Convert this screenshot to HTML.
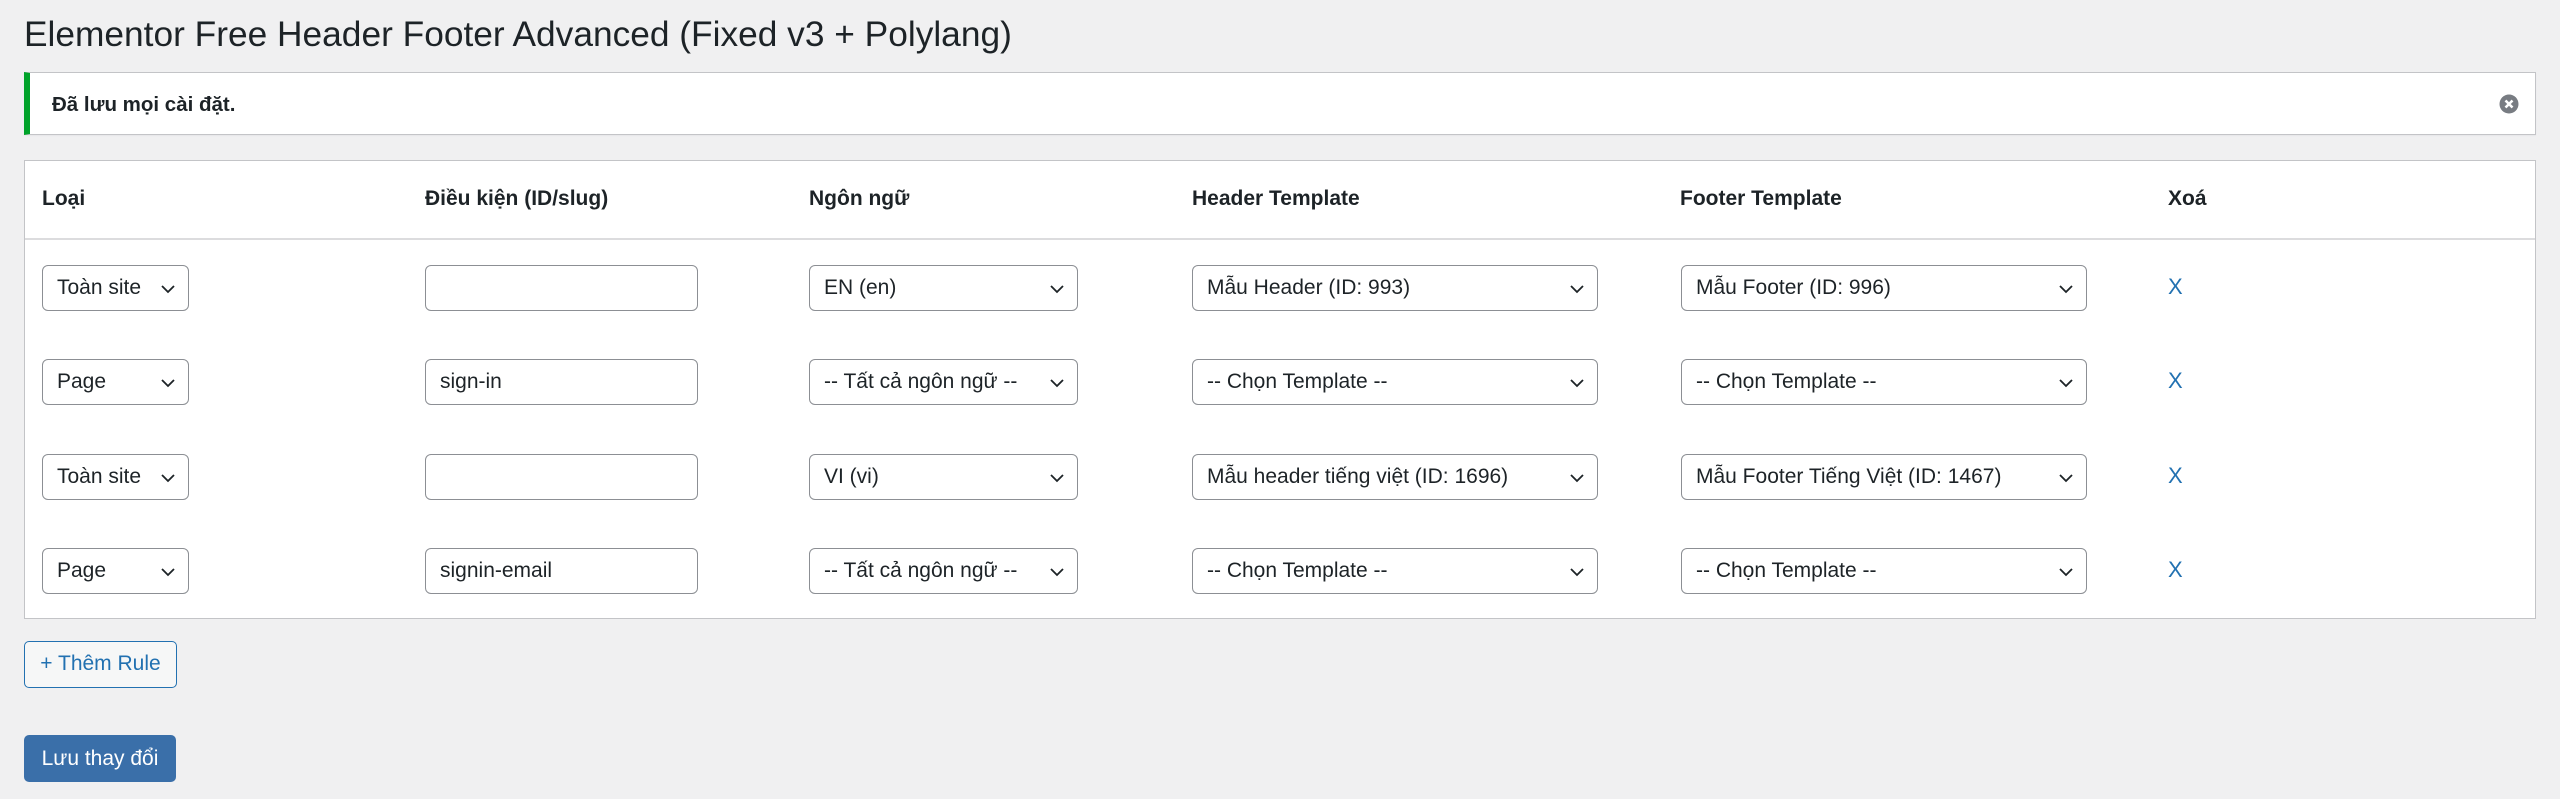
<!DOCTYPE html>
<html><head><meta charset="utf-8"><style>
*{box-sizing:border-box;margin:0;padding:0}
body{width:2560px;height:799px;background:#f0f0f1;font-family:"Liberation Sans","Noto Sans CJK SC",sans-serif;color:#1d2327;position:relative;overflow:hidden}
.a{position:absolute}
h1{position:absolute;left:24px;top:13px;font-size:35.3px;font-weight:400;line-height:44px;white-space:nowrap}
.notice{left:24px;top:72px;width:2512px;height:63px;background:#fff;border:1px solid #c3c4c7;border-left:6px solid #00a32a;box-shadow:0 1px 1px rgba(0,0,0,.04)}
.notice span{position:absolute;left:22px;top:20px;font-size:20.5px;font-weight:600}
.tbl{left:24px;top:160px;width:2512px;height:459px;background:#fff;border:1px solid #c3c4c7}
.hline{left:25px;top:238px;width:2510px;height:2px;background:#dcdcde}
.th{font-size:21px;font-weight:700;top:187px}
.sel,.inp{height:46px;border:1.5px solid #8c8f94;border-radius:6px;background:#fff;font-size:21px;line-height:43px;padding-left:14px;white-space:nowrap;overflow:hidden}
.sel svg{position:absolute;right:12px;top:15px}
.x{color:#2271b1;font-size:22px}
.btn{border-radius:5px;font-size:21px;line-height:44px;text-align:center;height:47px}
</style></head><body>
<h1>Elementor Free Header Footer Advanced (Fixed v3 + Polylang)</h1>
<div class="a notice"><span>Đã lưu mọi cài đặt.</span>
<svg class="a" style="left:2469px;top:21px" width="20" height="20" viewBox="0 0 20 20"><circle cx="10" cy="10" r="9.5" fill="#787c82"/><path d="M6.5 6.5l7 7M13.5 6.5l-7 7" stroke="#fff" stroke-width="2.6"/></svg></div>
<div class="a tbl"></div>
<div class="a hline"></div>
<div class="a th" style="left:42px">Loại</div>
<div class="a th" style="left:425px">Điều kiện (ID/slug)</div>
<div class="a th" style="left:809px">Ngôn ngữ</div>
<div class="a th" style="left:1192px">Header Template</div>
<div class="a th" style="left:1680px">Footer Template</div>
<div class="a th" style="left:2168px">Xoá</div>

<div class="a sel" style="left:42px;top:265px;width:147px">Toàn site<svg width="16" height="16" viewBox="0 0 16 16"><path d="M2 5l6 6 6-6" fill="none" stroke="#1d2327" stroke-width="1.8"/></svg></div>
<div class="a inp" style="left:425px;top:265px;width:273px"></div>
<div class="a sel" style="left:809px;top:265px;width:269px">EN (en)<svg width="16" height="16" viewBox="0 0 16 16"><path d="M2 5l6 6 6-6" fill="none" stroke="#1d2327" stroke-width="1.8"/></svg></div>
<div class="a sel" style="left:1192px;top:265px;width:406px">Mẫu Header (ID: 993)<svg width="16" height="16" viewBox="0 0 16 16"><path d="M2 5l6 6 6-6" fill="none" stroke="#1d2327" stroke-width="1.8"/></svg></div>
<div class="a sel" style="left:1681px;top:265px;width:406px">Mẫu Footer (ID: 996)<svg width="16" height="16" viewBox="0 0 16 16"><path d="M2 5l6 6 6-6" fill="none" stroke="#1d2327" stroke-width="1.8"/></svg></div>
<div class="a x" style="left:2168px;top:274px">X</div>

<div class="a sel" style="left:42px;top:359px;width:147px">Page<svg width="16" height="16" viewBox="0 0 16 16"><path d="M2 5l6 6 6-6" fill="none" stroke="#1d2327" stroke-width="1.8"/></svg></div>
<div class="a inp" style="left:425px;top:359px;width:273px">sign-in</div>
<div class="a sel" style="left:809px;top:359px;width:269px">-- Tất cả ngôn ngữ --<svg width="16" height="16" viewBox="0 0 16 16"><path d="M2 5l6 6 6-6" fill="none" stroke="#1d2327" stroke-width="1.8"/></svg></div>
<div class="a sel" style="left:1192px;top:359px;width:406px">-- Chọn Template --<svg width="16" height="16" viewBox="0 0 16 16"><path d="M2 5l6 6 6-6" fill="none" stroke="#1d2327" stroke-width="1.8"/></svg></div>
<div class="a sel" style="left:1681px;top:359px;width:406px">-- Chọn Template --<svg width="16" height="16" viewBox="0 0 16 16"><path d="M2 5l6 6 6-6" fill="none" stroke="#1d2327" stroke-width="1.8"/></svg></div>
<div class="a x" style="left:2168px;top:368px">X</div>

<div class="a sel" style="left:42px;top:454px;width:147px">Toàn site<svg width="16" height="16" viewBox="0 0 16 16"><path d="M2 5l6 6 6-6" fill="none" stroke="#1d2327" stroke-width="1.8"/></svg></div>
<div class="a inp" style="left:425px;top:454px;width:273px"></div>
<div class="a sel" style="left:809px;top:454px;width:269px">VI (vi)<svg width="16" height="16" viewBox="0 0 16 16"><path d="M2 5l6 6 6-6" fill="none" stroke="#1d2327" stroke-width="1.8"/></svg></div>
<div class="a sel" style="left:1192px;top:454px;width:406px">Mẫu header tiếng việt (ID: 1696)<svg width="16" height="16" viewBox="0 0 16 16"><path d="M2 5l6 6 6-6" fill="none" stroke="#1d2327" stroke-width="1.8"/></svg></div>
<div class="a sel" style="left:1681px;top:454px;width:406px">Mẫu Footer Tiếng Việt (ID: 1467)<svg width="16" height="16" viewBox="0 0 16 16"><path d="M2 5l6 6 6-6" fill="none" stroke="#1d2327" stroke-width="1.8"/></svg></div>
<div class="a x" style="left:2168px;top:463px">X</div>

<div class="a sel" style="left:42px;top:548px;width:147px">Page<svg width="16" height="16" viewBox="0 0 16 16"><path d="M2 5l6 6 6-6" fill="none" stroke="#1d2327" stroke-width="1.8"/></svg></div>
<div class="a inp" style="left:425px;top:548px;width:273px">signin-email</div>
<div class="a sel" style="left:809px;top:548px;width:269px">-- Tất cả ngôn ngữ --<svg width="16" height="16" viewBox="0 0 16 16"><path d="M2 5l6 6 6-6" fill="none" stroke="#1d2327" stroke-width="1.8"/></svg></div>
<div class="a sel" style="left:1192px;top:548px;width:406px">-- Chọn Template --<svg width="16" height="16" viewBox="0 0 16 16"><path d="M2 5l6 6 6-6" fill="none" stroke="#1d2327" stroke-width="1.8"/></svg></div>
<div class="a sel" style="left:1681px;top:548px;width:406px">-- Chọn Template --<svg width="16" height="16" viewBox="0 0 16 16"><path d="M2 5l6 6 6-6" fill="none" stroke="#1d2327" stroke-width="1.8"/></svg></div>
<div class="a x" style="left:2168px;top:557px">X</div>

<div class="a btn" style="left:24px;top:641px;width:153px;border:1.5px solid #2271b1;background:#f6f7f7;color:#2271b1">+ Thêm Rule</div>
<div class="a btn" style="left:24px;top:735px;width:152px;background:#3a6fa9;color:#fff;line-height:47px">Lưu thay đổi</div>
</body></html>
